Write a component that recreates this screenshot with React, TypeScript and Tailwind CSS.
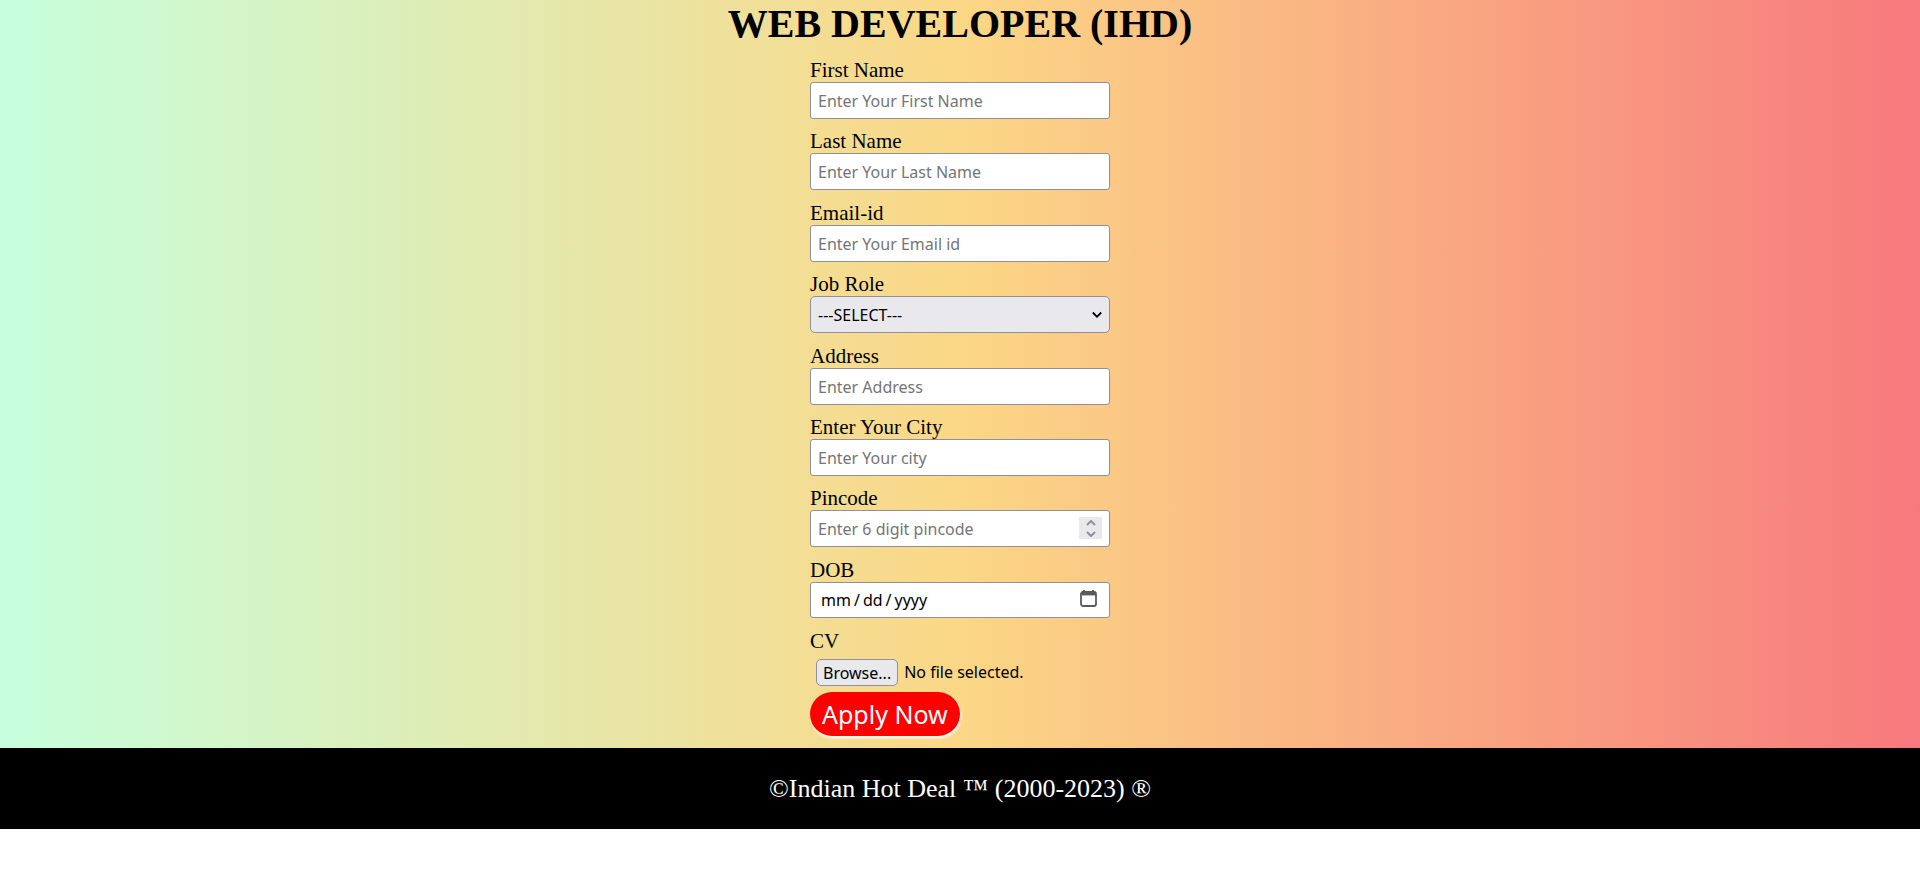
import { useState } from "react";
import type { ReactNode } from "react";

const control =
  "block w-full rounded-[3px] border border-[#8f8f9d] bg-white px-[7px] font-['Noto_Sans',sans-serif] text-[16px] text-black placeholder:text-[#757575]";

function Field({ id, label, children }: { id: string; label: string; children: ReactNode }) {
  return (
    <div>
      <label htmlFor={id} className="block text-[21px] leading-[23px]">
        {label}
      </label>
      <div className="relative">{children}</div>
    </div>
  );
}

function TextField({ id, label, placeholder, type = "text" }: { id: string; label: string; placeholder: string; type?: string }) {
  return (
    <Field id={id} label={label}>
      <input id={id} name={id} type={type} placeholder={placeholder} className={`${control} h-[37px] pt-px`} />
    </Field>
  );
}

export default function App() {
  const [pincode, setPincode] = useState("");
  const [fileName, setFileName] = useState("No file selected.");
  const step = (by: number) => setPincode(String(Math.max(0, Number(pincode) + by)));

  return (
    <div className="min-h-screen bg-white font-['Liberation_Serif',serif] text-black">
      <main className="bg-linear-to-r/srgb from-[#c6ffdd] via-[#fbd786] to-[#f7797d] pb-3">
        <h1 className="text-center text-[40px] leading-[48px] font-bold">WEB DEVELOPER (IHD)</h1>
        <form className="mx-auto w-[300px] pt-[11px]" onSubmit={(e) => e.preventDefault()}>
          <div className="grid min-h-[571px] auto-rows-fr">
            <TextField id="first-name" label="First Name" placeholder="Enter Your First Name" />
            <TextField id="last-name" label="Last Name" placeholder="Enter Your Last Name" />
            <TextField id="email" label="Email-id" placeholder="Enter Your Email id" type="email" />
            <Field id="job-role" label="Job Role">
              <select
                id="job-role"
                className="block h-[37px] w-full appearance-none rounded-[5px] border border-[#8f8f9d] bg-[#e9e9ed] px-[7px] pt-px font-['Noto_Sans',sans-serif] text-[16px]"
              >
                <option>---SELECT---</option>
              </select>
              <svg className="pointer-events-none absolute top-[14px] right-2 h-[10px] w-[10px]" viewBox="0 0 10 10" fill="none" stroke="black" strokeWidth="1.8" aria-hidden="true">
                <path d="M.8 2.5L5 6.8l4.2-4.3" />
              </svg>
            </Field>
            <TextField id="address" label="Address" placeholder="Enter Address" />
            <TextField id="city" label="Enter Your City" placeholder="Enter Your city" />
            <Field id="pincode" label="Pincode">
              <input
                id="pincode"
                type="number"
                placeholder="Enter 6 digit pincode"
                value={pincode}
                onChange={(e) => setPincode(e.target.value)}
                className={`${control} h-[37px] pt-px [&::-webkit-inner-spin-button]:appearance-none`}
              />
              <div className="absolute top-[7px] right-2 flex h-[22px] w-[23px] flex-col bg-[#e9e9ed]">
                <button type="button" aria-label="Increase" onClick={() => step(1)} className="flex flex-1 items-center justify-center">
                  <svg className="h-[6px] w-[10px]" viewBox="0 0 10 6" fill="none" stroke="#8f8f9d" strokeWidth="2">
                    <path d="M1 5l4-4 4 4" />
                  </svg>
                </button>
                <button type="button" aria-label="Decrease" onClick={() => step(-1)} className="flex flex-1 items-center justify-center">
                  <svg className="h-[6px] w-[10px]" viewBox="0 0 10 6" fill="none" stroke="#8f8f9d" strokeWidth="2">
                    <path d="M1 1l4 4 4-4" />
                  </svg>
                </button>
              </div>
            </Field>
            <Field id="dob" label="DOB">
              <input
                id="dob"
                type="date"
                className={`${control} h-[36px] pl-[10px] [&::-webkit-calendar-picker-indicator]:opacity-0 [&::-webkit-datetime-edit-text]:px-[3px] [&::-webkit-datetime-edit-month-field]:px-0 [&::-webkit-datetime-edit-day-field]:px-0 [&::-webkit-datetime-edit-year-field]:px-0`}
              />
              <svg className="pointer-events-none absolute top-2 right-[13px] h-[17px] w-[17px]" viewBox="0 0 17 17" fill="none" stroke="#5b5b5f" aria-hidden="true">
                <rect x="1" y="2" width="15" height="14" rx="2" strokeWidth="1.8" />
                <path d="M1.2 3.5h14.6" strokeWidth="3.8" />
                <path d="M4 0v3M13 0v3" strokeWidth="2" />
              </svg>
            </Field>
          </div>
          <div className="text-[21px] leading-[23px]">CV</div>
          <label
            htmlFor="cv"
            className="mt-[5px] mb-[6px] ml-[6px] flex items-center gap-[6px] font-['Noto_Sans',sans-serif] text-[16px]"
          >
            <input
              id="cv"
              type="file"
              aria-label="CV"
              className="sr-only"
              onChange={(e) => setFileName(e.target.files?.[0]?.name ?? "No file selected.")}
            />
            <span className="h-[27px] rounded-[5px] border border-[#8f8f9d] bg-[#e9e9ed] px-[6px] leading-[27px]">Browse...</span>
            <span className="pt-px leading-[27px]">{fileName}</span>
          </label>
          <button
            type="submit"
            className="block h-[44px] rounded-full bg-[#ff0000] px-3 font-['Noto_Sans',sans-serif] text-[25px] leading-[44px] text-white shadow-[1px_2px_3px_white]"
          >
            Apply Now
          </button>
        </form>
      </main>
      <footer className="bg-black py-[25px] text-center text-[26px] leading-[31px] text-white">
        ©Indian Hot Deal ™ (2000-2023) ®
      </footer>
    </div>
  );
}
